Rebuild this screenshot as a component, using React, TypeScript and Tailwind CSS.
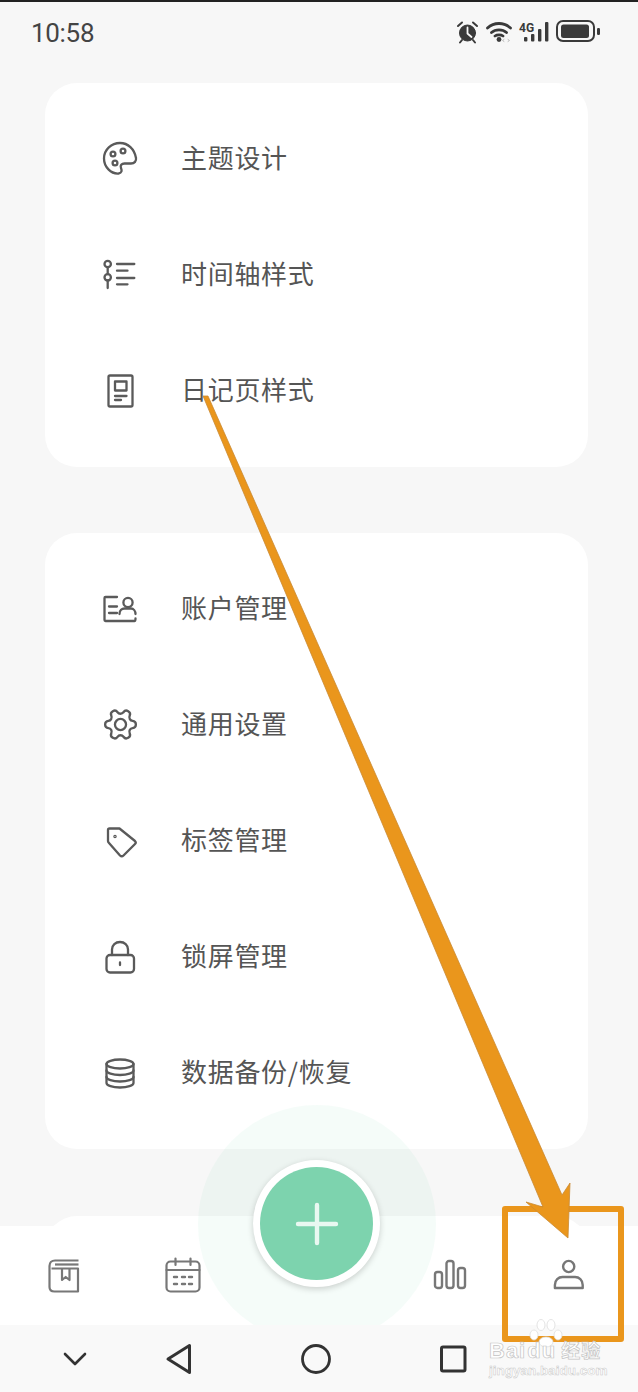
import { ReactNode } from "react";

const stroke = "#5a5a5a";

function Box({ children }: { children: ReactNode }) {
  return (
    <svg width="40" height="40" viewBox="0 0 40 40" fill="none" stroke={stroke} strokeWidth="2.3" strokeLinecap="round" strokeLinejoin="round">
      {children}
    </svg>
  );
}

const PaletteIcon = () => (
  <Box>
    <path d="M20 5C11.5 5 4 11.5 4 20.5C4 29 11 36 18.5 35.5C22 35 22 32.5 21 30C20 27.5 21.5 25.5 24.5 25.5H31C34.5 25.5 36.5 23 36 20C34.5 11 28 5 20 5Z" />
    <circle cx="13" cy="16" r="2.4" />
    <circle cx="23" cy="13" r="2.4" />
    <circle cx="15" cy="25" r="2.4" />
  </Box>
);

const TimelineIcon = () => (
  <Box>
    <circle cx="7.7" cy="10" r="3.2" />
    <circle cx="7.7" cy="23.3" r="3.2" />
    <path d="M7.7 13.2V20.1M7.7 26.5V34M17 10H34.3M17 16.7H27.5M17 24H34.3M17 30.3H27.5" />
  </Box>
);

const DiaryIcon = () => (
  <Box>
    <rect x="8.5" y="5.5" width="24" height="31" rx="1.5" />
    <rect x="15" y="11.5" width="11.5" height="9" />
    <path d="M15 26H26.5M15 30H21" />
  </Box>
);

const AccountIcon = () => (
  <Box>
    <path d="M17 9H5.5C5 9 4.5 9.5 4.5 10V32C4.5 32.5 5 33 5.5 33H34.5C35.5 33 35.5 32 35.5 30.5" />
    <path d="M9 18.5H17M9 25H17" />
    <circle cx="28" cy="14.5" r="4.6" />
    <path d="M19.5 26C19.5 22.5 22 20.5 24.5 20.5H31C33.5 20.5 35.5 23 35.5 26" />
  </Box>
);

const GearIcon = () => (
  <svg width="37" height="37" viewBox="0 0 24 24" fill="none" stroke={stroke} strokeWidth="1.5" strokeLinecap="round" strokeLinejoin="round">
    <g transform="rotate(30 12 12)">
      <path d="M9.671 4.136a2.34 2.34 0 0 1 4.659 0 2.34 2.34 0 0 0 3.319 1.915 2.34 2.34 0 0 1 2.33 4.033 2.34 2.34 0 0 0 0 3.831 2.34 2.34 0 0 1-2.33 4.033 2.34 2.34 0 0 0-3.319 1.915 2.34 2.34 0 0 1-4.659 0 2.34 2.34 0 0 0-3.32-1.915 2.34 2.34 0 0 1-2.33-4.033 2.34 2.34 0 0 0 0-3.831A2.34 2.34 0 0 1 6.35 6.051a2.34 2.34 0 0 0 3.32-1.915" />
    </g>
    <circle cx="12" cy="12" r="3.6" />
  </svg>
);

const TagIcon = () => (
  <Box>
    <path d="M9.5 8.5H19.5L35 21C36 22 36 23 35 24L23.5 35.5C22.5 36.5 21 36.5 20 35.5L9 23C8.5 22.5 8 21.5 8 21V10C8 9 8.5 8.5 9.5 8.5Z" />
    <circle cx="15" cy="16.5" r="0.6" />
  </Box>
);

const LockIcon = () => (
  <Box>
    <rect x="6.5" y="19" width="27.5" height="17.5" rx="3.5" />
    <path d="M12 19V13.5C12 9 15.5 6 20 6C24.5 6 28 9 28 13.5V19M20 26.5V29" />
  </Box>
);

const DatabaseIcon = () => (
  <Box>
    <ellipse cx="20" cy="12" rx="13.5" ry="4.5" />
    <path d="M6.5 12V31C6.5 33.5 12.5 35.5 20 35.5C27.5 35.5 33.5 33.5 33.5 31V12" />
    <path d="M6.5 18.5C6.5 21 12.5 23 20 23C27.5 23 33.5 21 33.5 18.5" />
    <path d="M6.5 25C6.5 27.5 12.5 29.5 20 29.5C27.5 29.5 33.5 27.5 33.5 25" />
  </Box>
);

const iconWrap = "w-10 h-10 flex items-center justify-center";

const group1: { label: string; icon: ReactNode }[] = [
  { label: "主题设计", icon: <PaletteIcon /> },
  { label: "时间轴样式", icon: <TimelineIcon /> },
  { label: "日记页样式", icon: <DiaryIcon /> },
];

const group2: { label: string; icon: ReactNode }[] = [
  { label: "账户管理", icon: <AccountIcon /> },
  { label: "通用设置", icon: <GearIcon /> },
  { label: "标签管理", icon: <TagIcon /> },
  { label: "锁屏管理", icon: <LockIcon /> },
  { label: "数据备份/恢复", icon: <DatabaseIcon /> },
];

function Card({ items }: { items: { label: string; icon: ReactNode }[] }) {
  return (
    <div className="mx-[45px] w-[543px] bg-white rounded-[32px] pt-[17px] pb-[19px]">
      {items.map((item) => (
        <div key={item.label} className="h-[116px] pl-[55px] flex items-center gap-[41px]">
          <div className={iconWrap}>{item.icon}</div>
          <span className="mb-[4px] text-[26px] tracking-[0.7px] text-[#555555] font-['Noto_Sans_CJK_SC',sans-serif]">
            {item.label}
          </span>
        </div>
      ))}
    </div>
  );
}

function StatusBar() {
  return (
    <div className="h-[83px] flex flex-col">
      <div className="h-[2px] bg-[#222222]" />
      <div className="flex items-start justify-between pl-[31px] pr-[38px] pt-[12px]">
        <span className="text-[26px] leading-[38px] tracking-[-0.3px] text-[#444444] font-['Roboto',sans-serif]">10:58</span>
        <div className="flex items-start mt-[6px]">
          <svg width="24" height="24" viewBox="0 0 24 24" fill="#3a3a3a" stroke="#3a3a3a" strokeLinecap="round">
            <circle cx="11.5" cy="13" r="8" />
            <path d="M2 6L6 2.5M21 6L17 2.5M6 20L4 22.5M17 20L19 22.5" fill="none" strokeWidth="2" />
            <path d="M11.5 7.5V13.5L15.5 17" fill="none" stroke="#f7f7f7" strokeWidth="1.8" />
          </svg>
          <svg className="ml-[5px]" width="28" height="24" viewBox="0 0 28 24" fill="none" stroke="#3a3a3a" strokeWidth="2.8" strokeLinecap="round">
            <path d="M2.5 8C9 2 19 2 25.5 8M6.5 12.5C10.5 9 17.5 9 21.5 12.5M10 16C12 14.5 16 14.5 18 16" />
            <circle cx="14" cy="19.5" r="2.4" fill="#3a3a3a" stroke="none" />
            <path d="M19 19.5L17.5 20.5L19 21.5M23 19.5L24.5 20.5L23 21.5" stroke="#b5b5b5" strokeWidth="0.9" />
          </svg>
          <div className="relative ml-[6px] w-[32px] h-[24px]">
            <span className="absolute left-0 top-[2px] text-[12px] leading-[12px] font-bold text-[#3a3a3a] font-['Roboto',sans-serif]">4G</span>
            <svg className="absolute left-0 top-0" width="32" height="24" viewBox="0 0 32 24" fill="#3a3a3a">
              <rect x="5" y="17" width="3.4" height="4.5" rx="1" />
              <rect x="12" y="14" width="3.4" height="7.5" rx="1" />
              <rect x="19" y="9" width="3.4" height="12.5" rx="1" />
              <rect x="26" y="2" width="3.4" height="19.5" rx="1" />
            </svg>
          </div>
          <svg className="ml-[4px]" width="45" height="24" viewBox="0 0 45 24" fill="none">
            <rect x="2" y="1" width="37" height="20" rx="6" stroke="#3a3a3a" strokeWidth="2" />
            <rect x="6" y="4.5" width="28" height="13.5" rx="2.5" fill="#3a3a3a" />
            <rect x="42" y="8" width="3" height="7" rx="1.2" fill="#3a3a3a" />
          </svg>
        </div>
      </div>
    </div>
  );
}

function BottomBar() {
  const gray = "#777777";
  return (
    <div className="absolute left-0 bottom-0 w-full flex flex-col">
      <div className="relative h-[99px] bg-white/95 flex items-start pt-[31px]">
        <svg className="ml-[48px] mt-[2px]" width="32" height="34" viewBox="0 0 32 34" fill="none" stroke={gray} strokeWidth="2.2" strokeLinejoin="round">
          <path d="M30.5 1.5H7C3.5 1.5 1.5 4 1.5 7V28C1.5 31 3.5 32.5 6.5 32.5H30V9.5H3.5" />
          <path d="M7 5.5H30.5" />
          <path d="M14 9.5V21L17.7 18L21.5 21V9.5" />
        </svg>
        <svg className="ml-[85px]" width="36" height="38" viewBox="0 0 36 38" fill="none" stroke={gray} strokeWidth="2.2" strokeLinecap="round">
          <rect x="1.5" y="4.5" width="33" height="30" rx="4" />
          <path d="M1.5 13H34.5M10.5 1.5V8M25.5 1.5V8" />
          <path d="M9 20H12M17 20H20M24 20H27M9 27H12M17 27H20M24 27H27" strokeWidth="2.4" />
        </svg>
        <div className="absolute left-[198px] -top-[121px] w-[238px] h-[238px] rounded-full bg-[#7dd3ae]/[0.08]" />
        <div className="absolute left-[253px] -top-[66px] w-[127px] h-[127px] rounded-full bg-white flex items-center justify-center shadow-[0_2px_6px_rgba(0,0,0,0.18)]">
          <div className="w-[113px] h-[113px] rounded-full bg-[#7dd3ae] flex items-center justify-center">
            <svg width="44" height="44" viewBox="0 0 44 44" stroke="#e9f8f1" strokeWidth="4.4" strokeLinecap="round">
              <path d="M22 3V41M3 22H41" />
            </svg>
          </div>
        </div>
        <svg className="ml-[232px] mt-[2px]" width="34" height="32" viewBox="0 0 34 32" fill="none" stroke={gray} strokeWidth="2.4" strokeLinejoin="round">
          <rect x="2" y="13" width="7" height="16" rx="2.5" />
          <rect x="13.5" y="2" width="7" height="27" rx="2.5" />
          <rect x="25" y="9" width="7" height="20" rx="2.5" />
        </svg>
        <svg className="ml-[85px] mt-[2px]" width="33" height="32" viewBox="0 0 33 32" fill="none" stroke={gray} strokeWidth="2.4" strokeLinejoin="round">
          <circle cx="16.7" cy="7.5" r="5.6" />
          <path d="M2.9 29V26C2.9 21 6.5 18 10.5 18H23C27 18 30.7 21 30.7 26V29Z" />
        </svg>
      </div>
      <div className="relative z-10 h-[67px] bg-[#f9f9f9] flex items-center">
        <svg className="ml-[62px]" width="26" height="16" viewBox="0 0 26 16" fill="none" stroke="#333333" strokeWidth="2.6" strokeLinecap="round" strokeLinejoin="round">
          <path d="M3 3L13 13L23 3" />
        </svg>
        <svg className="ml-[77px]" width="28" height="32" viewBox="0 0 28 32" fill="none" stroke="#333333" strokeWidth="3" strokeLinejoin="round">
          <path d="M24.5 2.5V29.5L3 16Z" />
        </svg>
        <svg className="ml-[107px]" width="32" height="32" viewBox="0 0 32 32" fill="none" stroke="#333333" strokeWidth="2.8">
          <circle cx="16" cy="16" r="13.5" />
        </svg>
        <svg className="ml-[108px]" width="28" height="28" viewBox="0 0 28 28" fill="none" stroke="#333333" strokeWidth="3" strokeLinejoin="round">
          <rect x="1.5" y="2" width="23.5" height="24" rx="1.5" />
        </svg>
      </div>
    </div>
  );
}

function Annotation() {
  return (
    <>
      <div className="absolute z-20 left-[502px] top-[1206px] w-[122px] h-[136px] border-[6px] border-[#ea961c] rounded-[3px]" />
      <svg className="absolute z-20 left-0 top-0 pointer-events-none" width="638" height="1392" viewBox="0 0 638 1392">
        <path d="M203 396L208 396L562 1195L570 1183L568 1238L526 1202L543 1207L203 396Z" fill="#ea961c" stroke="#c98a35" strokeWidth="0.8" strokeLinejoin="round" />
      </svg>
    </>
  );
}

function Watermark() {
  return (
    <div className="absolute z-30 left-[489px] top-[1318px] w-[118px] h-[62px]">
      <svg className="absolute left-[39px] top-0" width="36" height="30" viewBox="0 0 36 30" fill="#ffffff" stroke="#dddddd" strokeWidth="0.8">
        <ellipse cx="6" cy="17" rx="4" ry="5" />
        <ellipse cx="13" cy="7" rx="4" ry="5.5" />
        <ellipse cx="23" cy="7" rx="4" ry="5.5" />
        <ellipse cx="30" cy="17" rx="4" ry="5" />
        <ellipse cx="18" cy="24" rx="7" ry="5" />
      </svg>
      <div className="absolute left-0 top-[20px] text-[22px] leading-[26px] tracking-[1px] font-bold text-white [-webkit-text-stroke:0.7px_#c4c4c4] font-['Liberation_Sans','Noto_Sans_CJK_SC',sans-serif] whitespace-nowrap">
        Bai<span className="ml-[1px]">du</span>
        <span className="ml-[5px] text-[19px]">经验</span>
      </div>
      <div className="absolute left-0 top-[45px] text-[13.5px] leading-[16px] font-bold text-white [-webkit-text-stroke:0.5px_#c9c9c9] font-['Liberation_Sans',sans-serif] whitespace-nowrap">
        jingyan.baidu.com
      </div>
    </div>
  );
}

export default function App() {
  return (
    <div className="relative w-[638px] h-[1392px] overflow-hidden bg-[#f7f7f7]">
      <StatusBar />
      <Card items={group1} />
      <div className="h-[66px]" />
      <Card items={group2} />
      <div className="h-[67px]" />
      <div className="mx-[45px] w-[543px] h-[200px] bg-white rounded-[32px]" />
      <BottomBar />
      <Annotation />
      <Watermark />
    </div>
  );
}
